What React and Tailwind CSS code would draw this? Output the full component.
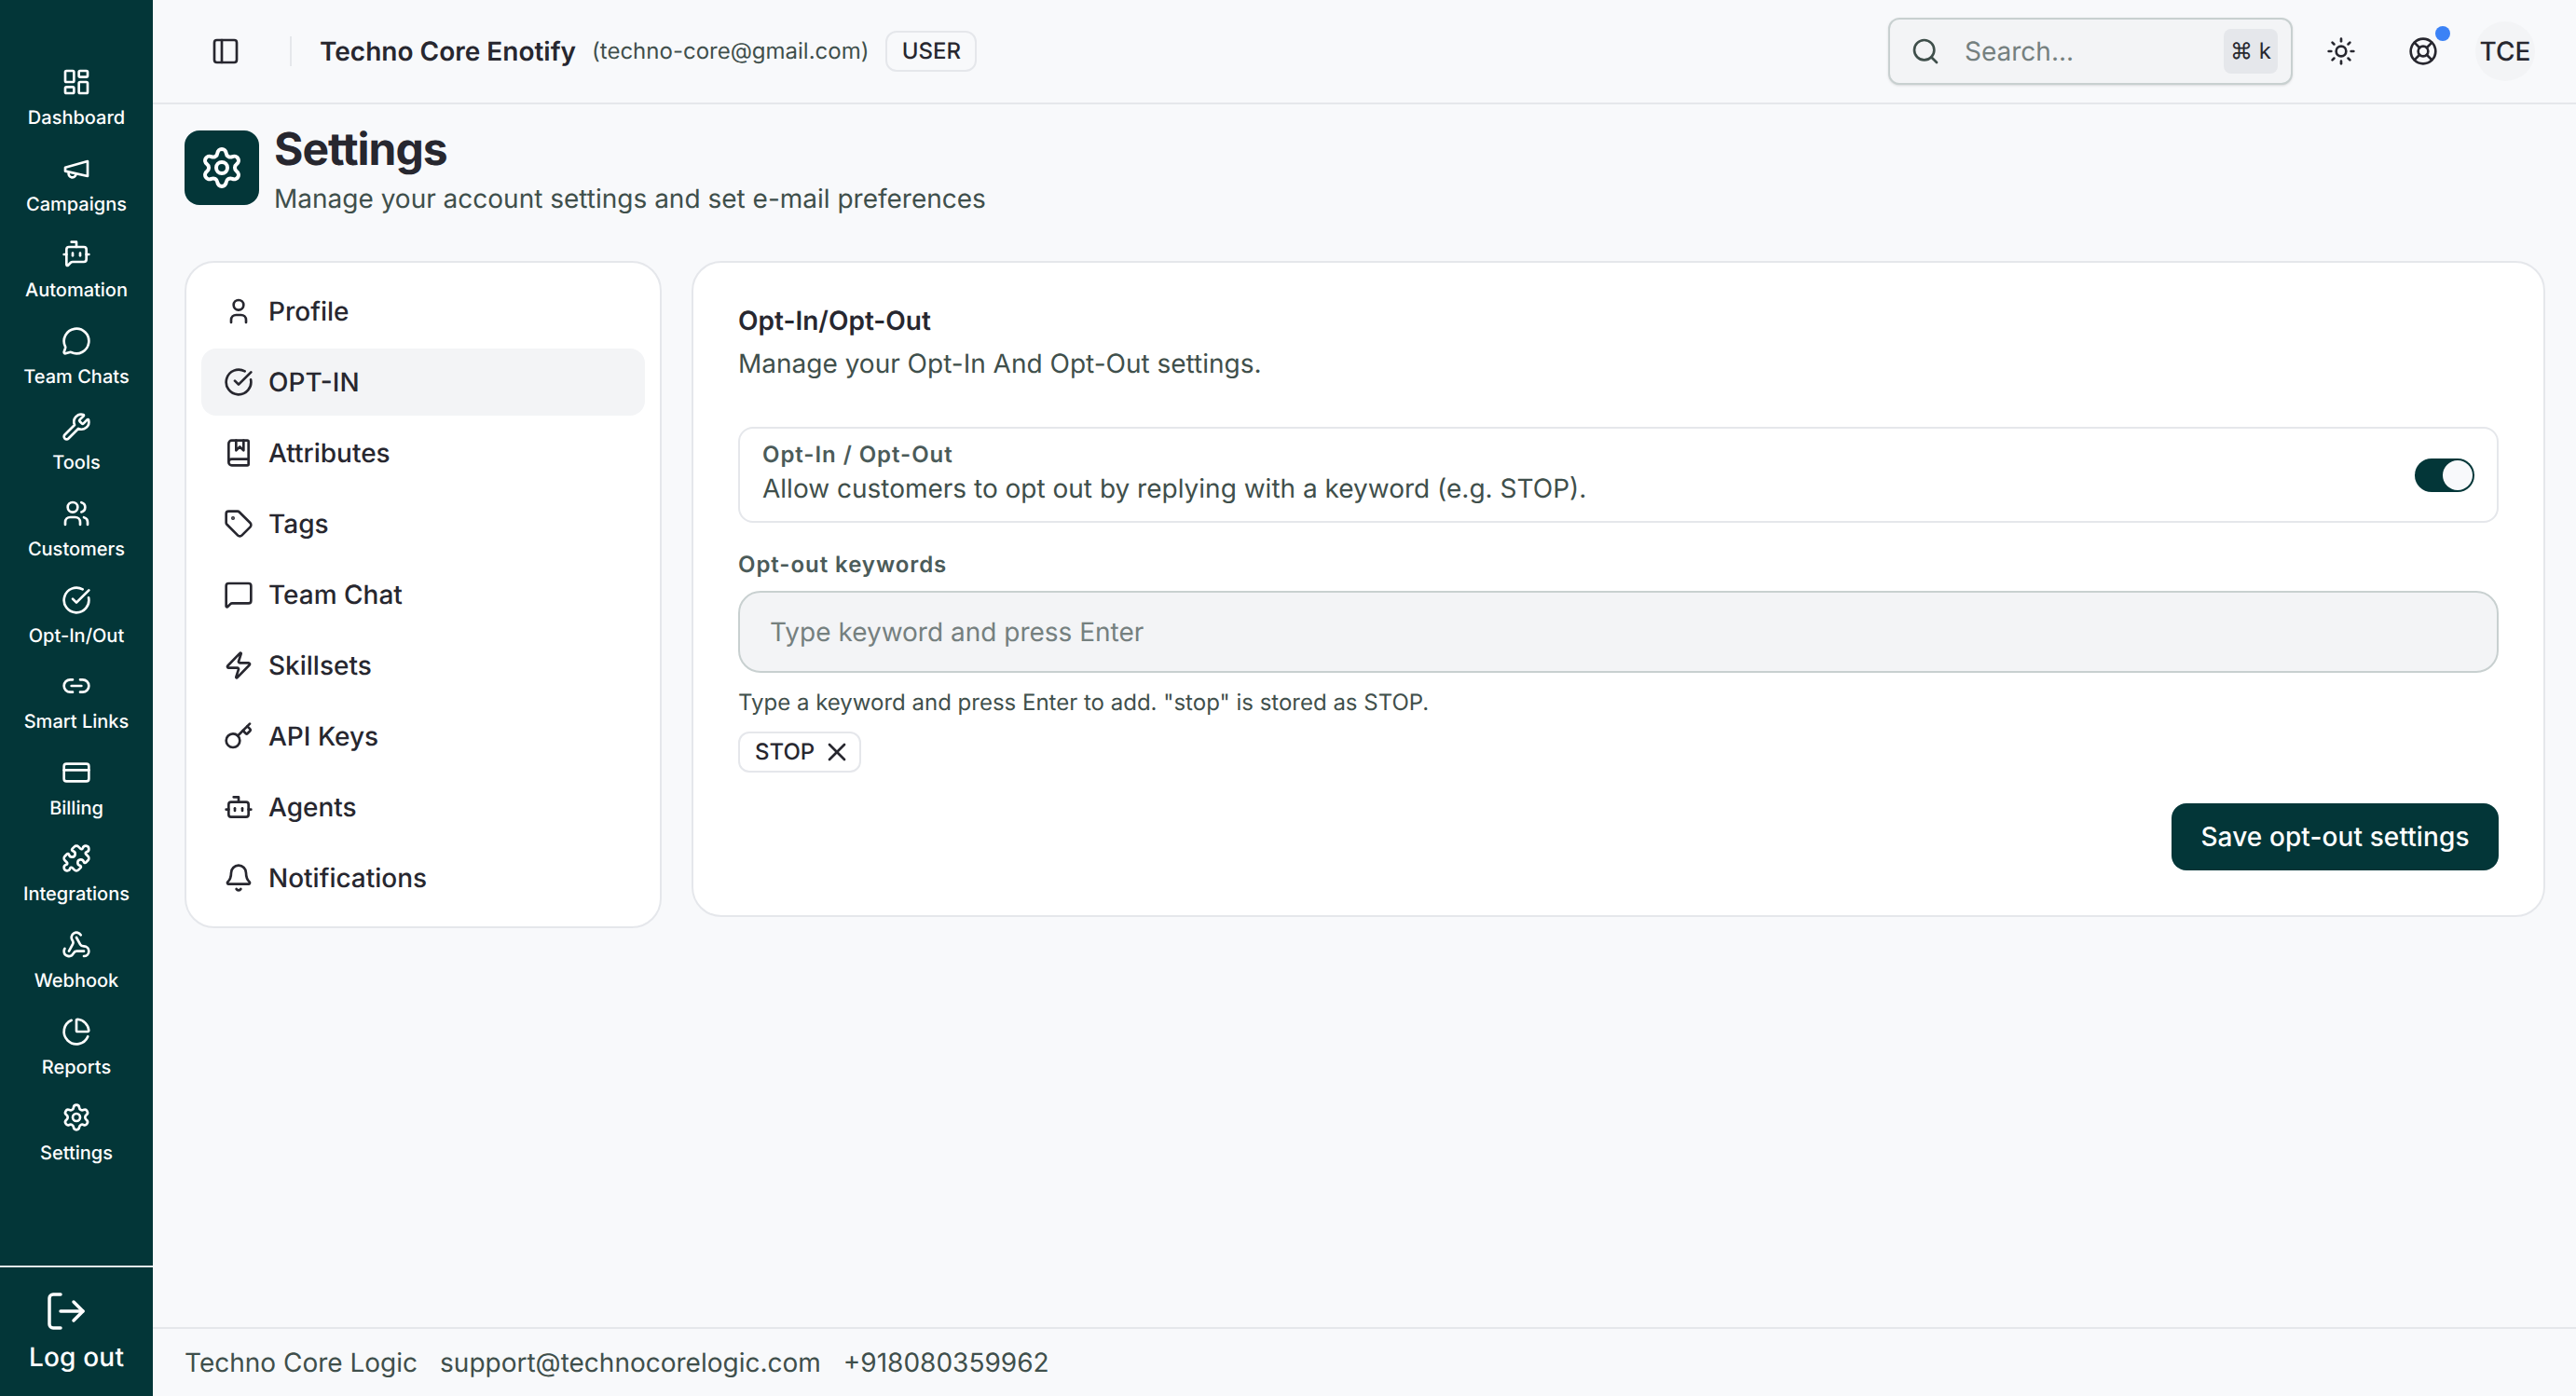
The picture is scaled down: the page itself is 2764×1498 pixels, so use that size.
import React from "react";
import {
  LayoutDashboard, BotMessageSquare, MessageCircle, Wrench, CircleCheckBig, Link2, CreditCard,
  Puzzle, Webhook, ChartPie, LogOut, BookMarked, Tag, MessageSquare, Zap, Key, Bot, Bell,
  PanelLeft, Search, Sun, LifeBuoy, X, Settings,
} from "lucide-react";
import { TbUser, TbUsers } from "react-icons/tb";

const Megaphone = (props) => (
  <svg xmlns="http://www.w3.org/2000/svg" viewBox="0 0 24 24" fill="none" stroke="currentColor" strokeWidth="2" strokeLinecap="round" strokeLinejoin="round" {...props}>
    <path d="m3 11 18-5v12L3 14v-3z" />
    <path d="M11.6 16.8a3 3 0 1 1-5.8-1.6" />
  </svg>
);

const mainNav = [
  { label: "Dashboard", icon: LayoutDashboard },
  { label: "Campaigns", icon: Megaphone },
  { label: "Automation", icon: BotMessageSquare },
  { label: "Team Chats", icon: MessageCircle },
  { label: "Tools", icon: Wrench },
  { label: "Customers", icon: TbUsers },
  { label: "Opt-In/Out", icon: CircleCheckBig },
  { label: "Smart Links", icon: Link2 },
  { label: "Billing", icon: CreditCard },
  { label: "Integrations", icon: Puzzle },
  { label: "Webhook", icon: Webhook },
  { label: "Reports", icon: ChartPie },
  { label: "Settings", icon: Settings },
];

const settingsNav = [
  { label: "Profile", icon: TbUser },
  { label: "OPT-IN", icon: CircleCheckBig, active: true },
  { label: "Attributes", icon: BookMarked },
  { label: "Tags", icon: Tag },
  { label: "Team Chat", icon: MessageSquare },
  { label: "Skillsets", icon: Zap },
  { label: "API Keys", icon: Key },
  { label: "Agents", icon: Bot },
  { label: "Notifications", icon: Bell },
];

const Sidebar = () => (
  <aside className="flex w-[164px] shrink-0 flex-col bg-[#033638] text-white">
    <nav className="flex flex-1 flex-col gap-[24.6px] pt-[72px]">
      {mainNav.map((item) => (
        <div key={item.label} className="flex h-[68px] flex-col items-center gap-2">
          <item.icon className="h-8 w-8" />
          <span className="text-[20px] leading-[28px] font-medium">{item.label}</span>
        </div>
      ))}
    </nav>
    <div className="flex h-[140px] flex-col items-center border-t-2 border-[#e2e8ea] pt-[23px]">
      <LogOut className="mr-[22px] h-12 w-12" strokeWidth={1.75} />
      <span className="mt-[7px] text-[28px] leading-[36px] font-medium tracking-[0.2px]">Log out</span>
    </div>
  </aside>
);

const Topbar = () => (
  <header className="flex h-[112px] shrink-0 items-center border-b-2 border-[#e5e7eb] pr-[44px] pl-[62px]">
    <PanelLeft className="h-8 w-8 text-[#27272f]" />
    <div className="mr-[30px] ml-[53px] h-[32px] w-[2px] bg-[#e5e7eb]" />
    <span className="text-[28px] font-semibold text-[#27272f]">Techno Core Enotify</span>
    <span className="ml-[17px] text-[24px] text-[#3f4f4b]">(techno-core@gmail.com)</span>
    <span className="ml-[18px] flex h-[44px] w-[98px] items-center justify-center rounded-[12px] border-2 border-[#e5e7eb] text-[24px] font-medium text-[#27272f]">USER</span>
    <div className="ml-auto flex h-[72px] w-[434px] items-center rounded-[12px] border-2 border-[#c8d0d0] bg-[#f3f4f6] pr-[14px] pl-[22px] shadow-sm">
      <Search className="h-8 w-8 text-[#3f4f4b]" />
      <span className="ml-[26px] text-[28px] text-[#75807f]">Search...</span>
      <span className="ml-auto flex h-[48px] w-[58px] items-center justify-center rounded-[8px] bg-[#e5e7eb] text-[24px] text-[#27272f]">⌘ k</span>
    </div>
    <Sun className="ml-[36px] h-8 w-8 text-[#27272f]" />
    <div className="relative ml-[56px]">
      <LifeBuoy className="h-8 w-8 text-[#27272f]" />
      <span className="absolute -top-[11px] -right-[13px] h-4 w-4 rounded-full bg-[#3b82f6]" />
    </div>
    <div className="ml-[40px] flex h-16 w-16 items-center justify-center rounded-full bg-[#f3f4f6] text-[28px] font-medium text-[#27272f]">TCE</div>
  </header>
);

const PageHeading = () => (
  <div className="flex items-start gap-4">
    <div className="flex h-20 w-20 items-center justify-center rounded-[16px] bg-[#033638] text-white">
      <Settings className="h-12 w-12" />
    </div>
    <div className="-mt-[4px]">
      <h1 className="text-[48px] leading-[48px] font-bold tracking-[-1px] text-[#27272f]">Settings</h1>
      <p className="mt-[9px] text-[28px] leading-[40px] text-[#3f4f4b]">Manage your account settings and set e-mail preferences</p>
    </div>
  </div>
);

const SettingsNav = () => (
  <div className="flex w-[512px] shrink-0 flex-col gap-1 rounded-[32px] border-2 border-[#e5e7eb] bg-white p-4">
    {settingsNav.map((item) => (
      <div key={item.label} className={`flex h-[72px] items-center gap-4 rounded-[16px] px-6 text-[#27272f] ${item.active ? "bg-[#f3f4f6]" : ""}`}>
        <item.icon className="h-8 w-8" />
        <span className="text-[28px] font-medium">{item.label}</span>
      </div>
    ))}
  </div>
);

const OptOutCard = () => (
  <div className="flex flex-1 flex-col rounded-[32px] border-2 border-[#e5e7eb] bg-white p-12">
    <h2 className="-mt-[6px] text-[28px] leading-[40px] font-semibold text-[#27272f]">Opt-In/Opt-Out</h2>
    <p className="mt-[6px] text-[28px] leading-[40px] text-[#3f4f4b]">Manage your Opt-In And Opt-Out settings.</p>

    <div className="mt-[48px] flex h-[103px] items-center justify-between rounded-[16px] border-2 border-[#e5e7eb] px-6">
      <div className="-mt-[6px]">
        <div className="text-[24px] leading-[32px] font-semibold tracking-[0.95px] text-[#4b5b59]">Opt-In / Opt-Out</div>
        <div className="mt-[2px] text-[28px] leading-[36px] text-[#3f4f4b]">Allow customers to opt out by replying with a keyword (e.g. STOP).</div>
      </div>
      <div className="flex h-[36px] w-[64px] items-center justify-end rounded-full bg-[#033638] p-[2px]">
        <div className="h-8 w-8 rounded-full bg-[#f8f9fb]" />
      </div>
    </div>

    <label className="mt-[29px] text-[24px] leading-[32px] font-semibold tracking-[0.95px] text-[#4b5b59]">Opt-out keywords</label>
    <div className="mt-[12px] flex h-[88px] items-center rounded-[24px] border-2 border-[#c8d0d0] bg-[#f3f4f6] px-8 text-[28px] text-[#75807f]">Type keyword and press Enter</div>
    <p className="mt-[16px] text-[24px] leading-[32px] text-[#3f4f4b]">Type a keyword and press Enter to add. "stop" is stored as STOP.</p>
    <div className="mt-[15px] flex">
      <span className="flex h-[44px] items-center gap-2 rounded-[12px] border-2 border-[#e5e7eb] pr-[8px] pl-4 text-[24px] font-medium text-[#27272f]">
        STOP
        <X className="h-8 w-8" />
      </span>
    </div>
    <div className="mt-[33px] flex justify-end">
      <button className="h-[72px] w-[351px] rounded-[16px] bg-[#033638] text-[28px] font-medium tracking-[0.1px] text-white">Save opt-out settings</button>
    </div>
  </div>
);

const App = () => (
  <div className="flex h-screen bg-[#f8f9fb] font-['Inter',sans-serif] [text-rendering:geometricPrecision]">
    <Sidebar />
    <div className="flex min-w-0 flex-1 flex-col">
      <Topbar />
      <main className="flex-1 pt-[28px] pr-[33px] pl-[34px]">
        <PageHeading />
        <div className="mt-[47px] flex items-start gap-[32px]">
          <SettingsNav />
          <OptOutCard />
        </div>
      </main>
      <footer className="flex h-[74px] shrink-0 items-center gap-[24px] border-t-2 border-[#e5e7eb] pr-[33px] pl-[34px] text-[28px] text-[#3f4f4b]">
        <span>Techno Core Logic</span>
        <span>support@technocorelogic.com</span>
        <span>+918080359962</span>
      </footer>
    </div>
  </div>
);

export default App;
